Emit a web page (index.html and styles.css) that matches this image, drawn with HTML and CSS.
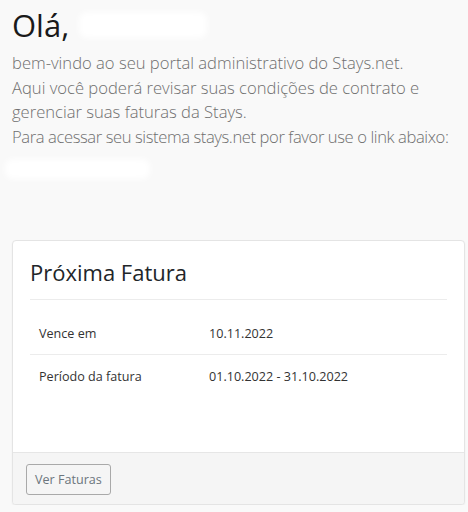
FILE: index.html
```html
<!DOCTYPE html>
<html lang="pt">
<head>
    <meta charset="UTF-8">
    <meta name="viewport" content="width=device-width, initial-scale=1.0">
    <title>Stays.net - Portal</title>
    <link rel="stylesheet" href="styles.css">
</head>
<body>
    <div id="page">
        <h1 class="greeting">Olá, <span class="redacted redacted-name"></span></h1>
        <p class="intro">
            bem-vindo ao seu portal administrativo do Stays.net.<br>
            Aqui você poderá revisar suas condições de contrato e gerenciar suas faturas da Stays.<br>
            <span class="nowrap">Para acessar seu sistema stays.net por favor use o link abaixo:</span>
        </p>
        <div class="link-line"><span class="redacted redacted-link"></span></div>

        <div class="card">
            <div class="card-body">
                <h2 class="card-title">Próxima Fatura</h2>
                <table class="info">
                    <tr>
                        <td class="label">Vence em</td>
                        <td>10.11.2022</td>
                    </tr>
                    <tr>
                        <td class="label">Período da fatura</td>
                        <td>01.10.2022 - 31.10.2022</td>
                    </tr>
                </table>
            </div>
            <div class="card-footer">
                <button class="btn">Ver Faturas</button>
            </div>
        </div>
    </div>
</body>
</html>
```

FILE: styles.css
```css
body {
    font-family: "Open Sans", "Noto Sans", sans-serif;
    background-color: #f9f9f9;
    color: #212529;
    margin: 0;
    padding: 0;
}
#page {
    padding: 0 3px 0 12px;
}
.greeting {
    font-size: 31px;
    font-weight: 400;
    line-height: 38px;
    margin: 6px 0 0 0;
    color: #1a1a1a;
    display: flex;
    align-items: center;
}
.redacted {
    display: inline-block;
    background-color: #fff;
    border-radius: 8px;
    filter: blur(3px);
}
.redacted-name {
    width: 128px;
    height: 26px;
    margin-left: 10px;
}
.intro {
    font-size: 16.6px;
    font-weight: 300;
    line-height: 24.5px;
    color: #6f6f6f;
    margin: 7px 0 0 0;
}
.nowrap {
    white-space: nowrap;
    letter-spacing: -0.4px;
}
.link-line {
    height: 30px;
    margin: 10px 0 0 -7px;
}
.redacted-link {
    width: 145px;
    height: 20px;
}
.card {
    margin-top: 51px;
    background-color: #fff;
    border: 1px solid #e4e4e4;
    border-radius: 4px;
    box-shadow: 0 1px 2px rgba(0, 0, 0, 0.06);
    overflow: hidden;
}
.card-body {
    padding: 16px 17px 0 17px;
    height: 195px;
}
.card-title {
    font-size: 22px;
    font-weight: 400;
    line-height: 30px;
    margin: 0 0 12px 0;
    padding-bottom: 12px;
    border-bottom: 1px solid #ececec;
}
.info {
    width: 100%;
    border-collapse: collapse;
    font-size: 12.6px;
    color: #333;
    margin-top: 12px;
}
.info td {
    padding: 11px 9px;
    height: 20px;
}
.info tr + tr td {
    border-top: 1px solid #ececec;
}
.info .label {
    width: 152px;
}
.card-footer {
    background-color: #f5f5f5;
    border-top: 1px solid #e6e6e6;
    padding: 11px 13px 9px 13px;
}
.btn {
    font-family: inherit;
    font-size: 12.6px;
    color: #6c757d;
    background-color: transparent;
    border: 1px solid #a9a9a9;
    border-radius: 3px;
    padding: 5px 8px;
    height: 31px;
    cursor: pointer;
}
```
